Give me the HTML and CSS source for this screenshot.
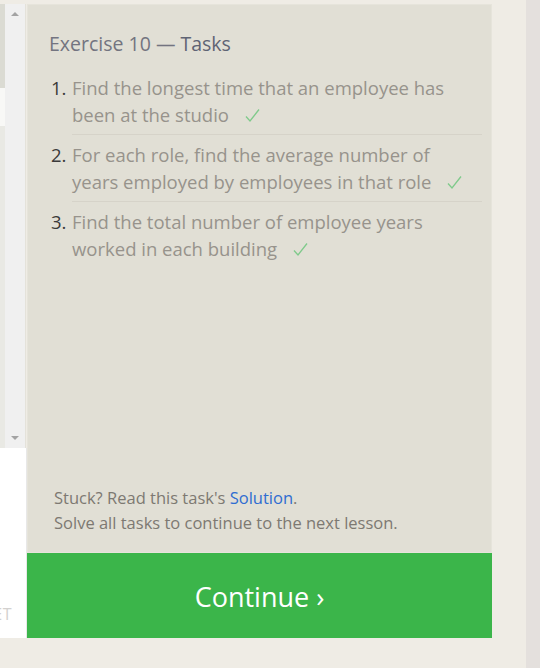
FILE: index.html
```html
<!DOCTYPE html>
<html>
<head>
<meta charset="utf-8">
<link rel="stylesheet" href="styles.css">
</head>
<body>
<div class="page">
  <div class="left">
    <div class="left-top"></div>
    <div class="editor">
      <div class="gutter">
        <div class="g1"></div>
        <div class="g2"></div>
        <div class="g3"></div>
      </div>
      <div class="scrollbar">
        <span class="arrow up"></span>
        <span class="arrow down"></span>
      </div>
    </div>
    <div class="results"><span class="reset">RESET</span></div>
    <div class="left-bottom"></div>
  </div>
  <div class="main">
    <div class="panel">
      <h2 class="title">Exercise 10 — <span class="title-b">Tasks</span></h2>
      <ol class="tasks">
        <li class="task"><span class="num">1.</span><span class="txt">Find the longest time that an employee has been at the studio<svg class="check" viewBox="0 0 15 15" width="15" height="15"><polyline points="1,8.5 5,13 14,1.5" /></svg></span></li>
        <li class="task"><span class="num">2.</span><span class="txt">For each role, find the average number of years employed by employees in that role<svg class="check" viewBox="0 0 15 15" width="15" height="15"><polyline points="1,8.5 5,13 14,1.5" /></svg></span></li>
        <li class="task"><span class="num">3.</span><span class="txt">Find the total number of employee years worked in each building<svg class="check" viewBox="0 0 15 15" width="15" height="15"><polyline points="1,8.5 5,13 14,1.5" /></svg></span></li>
      </ol>
      <div class="footer">
        <p>Stuck? Read this task's <a class="link">Solution</a>.</p>
        <p>Solve all tasks to continue to the next lesson.</p>
      </div>
    </div>
    <div class="continue">Continue ›</div>
  </div>
  <div class="gap"></div>
  <div class="rstrip"></div>
</div>
</body>
</html>
```

FILE: styles.css
```css
* { box-sizing: border-box; }
html, body { margin: 0; padding: 0; }
body {
  background: #efece5;
  font-family: "Open Sans", "Noto Sans", sans-serif;
}
.page {
  display: flex;
  width: 540px;
  height: 668px;
}
.left {
  width: 27px;
  display: flex;
  flex-direction: column;
}
.left-top { height: 4px; }
.editor {
  height: 444px;
  display: flex;
}
.gutter {
  width: 5px;
  display: flex;
  flex-direction: column;
}
.g1 { height: 84px; background: #dbdbd3; }
.g2 { height: 38px; background: #f8f8f6; }
.g3 { flex: 1; background: #e9e9e4; }
.scrollbar {
  width: 21px;
  background: #f0f0f0;
  display: flex;
  flex-direction: column;
  justify-content: space-between;
  align-items: center;
  padding: 8px 0 8px;
  border-right: 1px solid #e4e2da;
}
.arrow {
  width: 0; height: 0;
  border-left: 4px solid transparent;
  border-right: 4px solid transparent;
}
.arrow.up { border-bottom: 4px solid #a3a3a3; }
.arrow.down { border-top: 4px solid #a3a3a3; }
.results {
  height: 190px;
  background: #ffffff;
  display: flex;
  justify-content: flex-end;
  align-items: flex-end;
  overflow: hidden;
  padding: 0 14px 13px 0;
  border-right: 1px solid #e8e8e8;
}
.reset {
  flex-shrink: 0;
  font-size: 16px;
  color: #d3d1cf;
  letter-spacing: 0.5px;
}
.left-bottom { flex: 1; }

.main {
  width: 465px;
  display: flex;
  flex-direction: column;
}
.panel {
  margin-top: 4px;
  height: 549px;
  background: #e1dfd5;
  box-shadow: inset 0 0 0 1px #e6e4db;
  padding: 25px 10px 0 22px;
  display: flex;
  flex-direction: column;
}
.title {
  margin: 0;
  font-weight: normal;
  font-size: 19.5px;
  line-height: 29px;
  color: #737480;
}
.title-b { color: #5f6474; }
.tasks {
  list-style: none;
  margin: 16px 0 0 0;
  padding: 0;
}
.task {
  display: flex;
  padding: 0 0 0 2px;
}
.num {
  width: 21px;
  flex-shrink: 0;
  font-size: 18.5px;
  line-height: 27px;
  color: #3a3a3a;
  padding-top: 6px;
}
.txt {
  flex: 1;
  font-size: 18.5px;
  line-height: 27px;
  color: #97938c;
  padding: 6px 8px 6px 0;
  border-bottom: 1px solid #d6d3c9;
}
.task:first-child .num, .task:first-child .txt { padding-top: 0; }
.task:last-child .txt { border-bottom: none; }
.check {
  margin-left: 16px;
  vertical-align: -1px;
  fill: none;
  stroke: #7fca8b;
  stroke-width: 1.3;
}
.footer {
  margin-top: auto;
  padding: 0 0 18px 5px;
  font-size: 16.5px;
  line-height: 25px;
  color: #7d7972;
}
.footer p { margin: 0; }
.link { color: #2f6dd1; }
.continue {
  height: 85px;
  background: #3bb54a;
  color: #ffffff;
  font-size: 27px;
  display: flex;
  align-items: center;
  justify-content: center;
  padding-top: 2px;
}
.gap { width: 34px; }
.rstrip { width: 14px; background: #e4e0dd; }
```
